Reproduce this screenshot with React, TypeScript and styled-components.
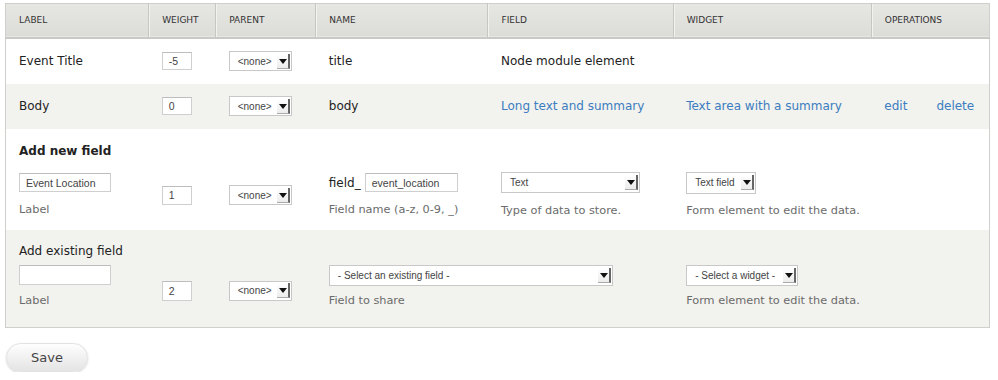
import styled, { createGlobalStyle } from "styled-components";

const GlobalStyle = createGlobalStyle`
  body {
    margin: 0;
    background: #fff;
    font-family: "DejaVu Sans", "Liberation Sans", sans-serif;
    color: #222;
  }
`;

const Page = styled.div`
  padding: 3px 8px 0 5px;
`;

const Table = styled.table`
  width: 985px;
  border-collapse: collapse;
  table-layout: fixed;
  border: 1px solid #cfcfcb;
`;

const HeadRow = styled.tr`
  height: 34px;
  background: linear-gradient(#e6e6e2, #dcdcd8);
  border-bottom: 2px solid #c9c9c5;
`;

const HeadCell = styled.th`
  padding: 0 0 0 13px;
  text-align: left;
  font-size: 9px;
  font-weight: normal;
  color: #333;
  border-left: 1px solid #c6c6c2;
  box-shadow: inset 1px 0 0 #f2f2ef;

  &:first-child {
    border-left: none;
    box-shadow: none;
  }
`;

const Row = styled.tr<{ $shade?: boolean }>`
  background: ${(p) => (p.$shade ? "#f2f2ee" : "#fff")};
`;

const Cell = styled.td<{ $h?: number; $lift?: number }>`
  padding: 0 0 ${(p) => p.$lift ?? 0}px 13px;
  height: ${(p) => (p.$h ? `${p.$h}px` : "auto")};
  vertical-align: middle;
  font-size: 12px;
  color: #222;
`;

const GroupCell = styled.td`
  padding: 0 0 0 13px;
  vertical-align: top;
`;

const GroupTitle = styled.div<{ $bold?: boolean; $top: number; $h: number }>`
  box-sizing: border-box;
  height: ${(p) => p.$h}px;
  padding-top: ${(p) => p.$top}px;
  font-size: 12px;
  line-height: 16px;
  font-weight: ${(p) => (p.$bold ? "bold" : "normal")};
`;

const Stack = styled.div<{ $top: number; $gap: number; $bottom: number }>`
  display: flex;
  flex-direction: column;
  align-items: flex-start;
  gap: ${(p) => p.$gap}px;
  padding: ${(p) => p.$top}px 0 ${(p) => p.$bottom}px;
`;

const Description = styled.div`
  font-size: 11.3px;
  line-height: 16px;
  color: #6b6b6b;
`;

const Link = styled.a`
  color: #3b7dc0;
  text-decoration: none;
  cursor: pointer;
`;

const Ops = styled.div`
  display: flex;
  gap: 29px;
`;

const TextInput = styled.div<{ $w: number; $h?: number }>`
  box-sizing: border-box;
  width: ${(p) => p.$w}px;
  height: ${(p) => p.$h ?? 19}px;
  display: flex;
  align-items: center;
  padding-left: 6px;
  border: 1px solid #cfcfcf;
  border-top-color: #bdbdbd;
  background: #fff;
  font-family: "Liberation Sans", Arial, sans-serif;
  font-size: 10.5px;
  color: #444;
`;

const Inline = styled.div`
  display: flex;
  align-items: center;
  gap: 4px;
`;

const SelectBox = styled.div<{ $w: number; $h?: number }>`
  box-sizing: border-box;
  width: ${(p) => p.$w}px;
  height: ${(p) => p.$h ?? 20}px;
  display: flex;
  align-items: center;
  padding: 0 1px 0 8px;
  border: 1px solid #c8c8c8;
  background: #fff;
  font-family: "Liberation Sans", Arial, sans-serif;
  font-size: 10px;
  color: #444;
  white-space: nowrap;
`;

const Arrow = styled.span`
  position: relative;
  margin-left: auto;
  width: 13px;
  height: 15px;
  box-sizing: border-box;
  border-right: 2px solid #666;
  border-bottom: 1px solid #aaa;
  background: linear-gradient(#fff, #ececec);

  &::before {
    content: "";
    position: absolute;
    left: 2px;
    top: 5px;
    border-left: 4px solid transparent;
    border-right: 4px solid transparent;
    border-top: 5px solid #111;
  }
`;

const SaveButton = styled.button`
  margin: 15px 0 0 1px;
  width: 82px;
  height: 29px;
  border-radius: 15px;
  border: 1px solid #e2e2e2;
  background: linear-gradient(#fefefe, #e4e4e4);
  box-shadow: 0 1px 2px rgba(0, 0, 0, 0.18);
  font-family: "DejaVu Sans", sans-serif;
  font-size: 13px;
  color: #444;
  cursor: pointer;
`;

const Select = ({ label, w, h }: { label: string; w: number; h?: number }) => (
  <SelectBox $w={w} $h={h}>
    {label}
    <Arrow />
  </SelectBox>
);

const columns = [
  { name: "Label", width: 143 },
  { name: "Weight", width: 67 },
  { name: "Parent", width: 100 },
  { name: "Name", width: 172 },
  { name: "Field", width: 185 },
  { name: "Widget", width: 198 },
  { name: "Operations", width: 118 },
];

const App = () => {
  return (
    <Page>
      <GlobalStyle />
      <Table>
        <colgroup>
          {columns.map((c) => (
            <col key={c.name} style={{ width: c.width }} />
          ))}
        </colgroup>
        <thead>
          <HeadRow>
            {columns.map((c) => (
              <HeadCell key={c.name}>{c.name.toUpperCase()}</HeadCell>
            ))}
          </HeadRow>
        </thead>
        <tbody>
          <Row>
            <Cell $h={45}>Event Title</Cell>
            <Cell>
              <TextInput $w={30} $h={18}>-5</TextInput>
            </Cell>
            <Cell>
              <Select label="<none>" w={63} />
            </Cell>
            <Cell>title</Cell>
            <Cell>Node module element</Cell>
            <Cell />
            <Cell />
          </Row>
          <Row $shade>
            <Cell $h={45}>Body</Cell>
            <Cell>
              <TextInput $w={30} $h={18}>0</TextInput>
            </Cell>
            <Cell>
              <Select label="<none>" w={63} />
            </Cell>
            <Cell>body</Cell>
            <Cell>
              <Link>Long text and summary</Link>
            </Cell>
            <Cell>
              <Link>Text area with a summary</Link>
            </Cell>
            <Cell>
              <Ops>
                <Link>edit</Link>
                <Link>delete</Link>
              </Ops>
            </Cell>
          </Row>

          <Row>
            <GroupCell colSpan={7}>
              <GroupTitle $bold $top={14} $h={34}>
                Add new field
              </GroupTitle>
            </GroupCell>
          </Row>
          <Row>
            <Cell>
              <Stack $top={10} $gap={10} $bottom={11}>
                <TextInput $w={92}>Event Location</TextInput>
                <Description>Label</Description>
              </Stack>
            </Cell>
            <Cell $lift={2}>
              <TextInput $w={30}>1</TextInput>
            </Cell>
            <Cell $lift={2}>
              <Select label="<none>" w={63} />
            </Cell>
            <Cell>
              <Stack $top={10} $gap={10} $bottom={11}>
                <Inline>
                  field_
                  <TextInput $w={93}>event_location</TextInput>
                </Inline>
                <Description>Field name (a-z, 0-9, _)</Description>
              </Stack>
            </Cell>
            <Cell>
              <Stack $top={9} $gap={10} $bottom={11}>
                <Select label="Text" w={139} h={21} />
                <Description>Type of data to store.</Description>
              </Stack>
            </Cell>
            <Cell>
              <Stack $top={9} $gap={9} $bottom={11}>
                <Select label="Text field" w={70} h={22} />
                <Description>Form element to edit the data.</Description>
              </Stack>
            </Cell>
            <Cell />
          </Row>

          <Row $shade>
            <GroupCell colSpan={7}>
              <GroupTitle $top={13} $h={32}>
                Add existing field
              </GroupTitle>
            </GroupCell>
          </Row>
          <Row $shade>
            <Cell>
              <Stack $top={3} $gap={8} $bottom={18}>
                <TextInput $w={92} $h={20} />
                <Description>Label</Description>
              </Stack>
            </Cell>
            <Cell $lift={7}>
              <TextInput $w={30} $h={20}>2</TextInput>
            </Cell>
            <Cell $lift={7}>
              <Select label="<none>" w={63} />
            </Cell>
            <Cell>
              <Stack $top={3} $gap={7} $bottom={18}>
                <Select label="- Select an existing field -" w={284} h={21} />
                <Description>Field to share</Description>
              </Stack>
            </Cell>
            <Cell />
            <Cell>
              <Stack $top={3} $gap={7} $bottom={18}>
                <Select label="- Select a widget -" w={112} h={21} />
                <Description>Form element to edit the data.</Description>
              </Stack>
            </Cell>
            <Cell />
          </Row>
        </tbody>
      </Table>
      <SaveButton>Save</SaveButton>
    </Page>
  );
};

export default App;
